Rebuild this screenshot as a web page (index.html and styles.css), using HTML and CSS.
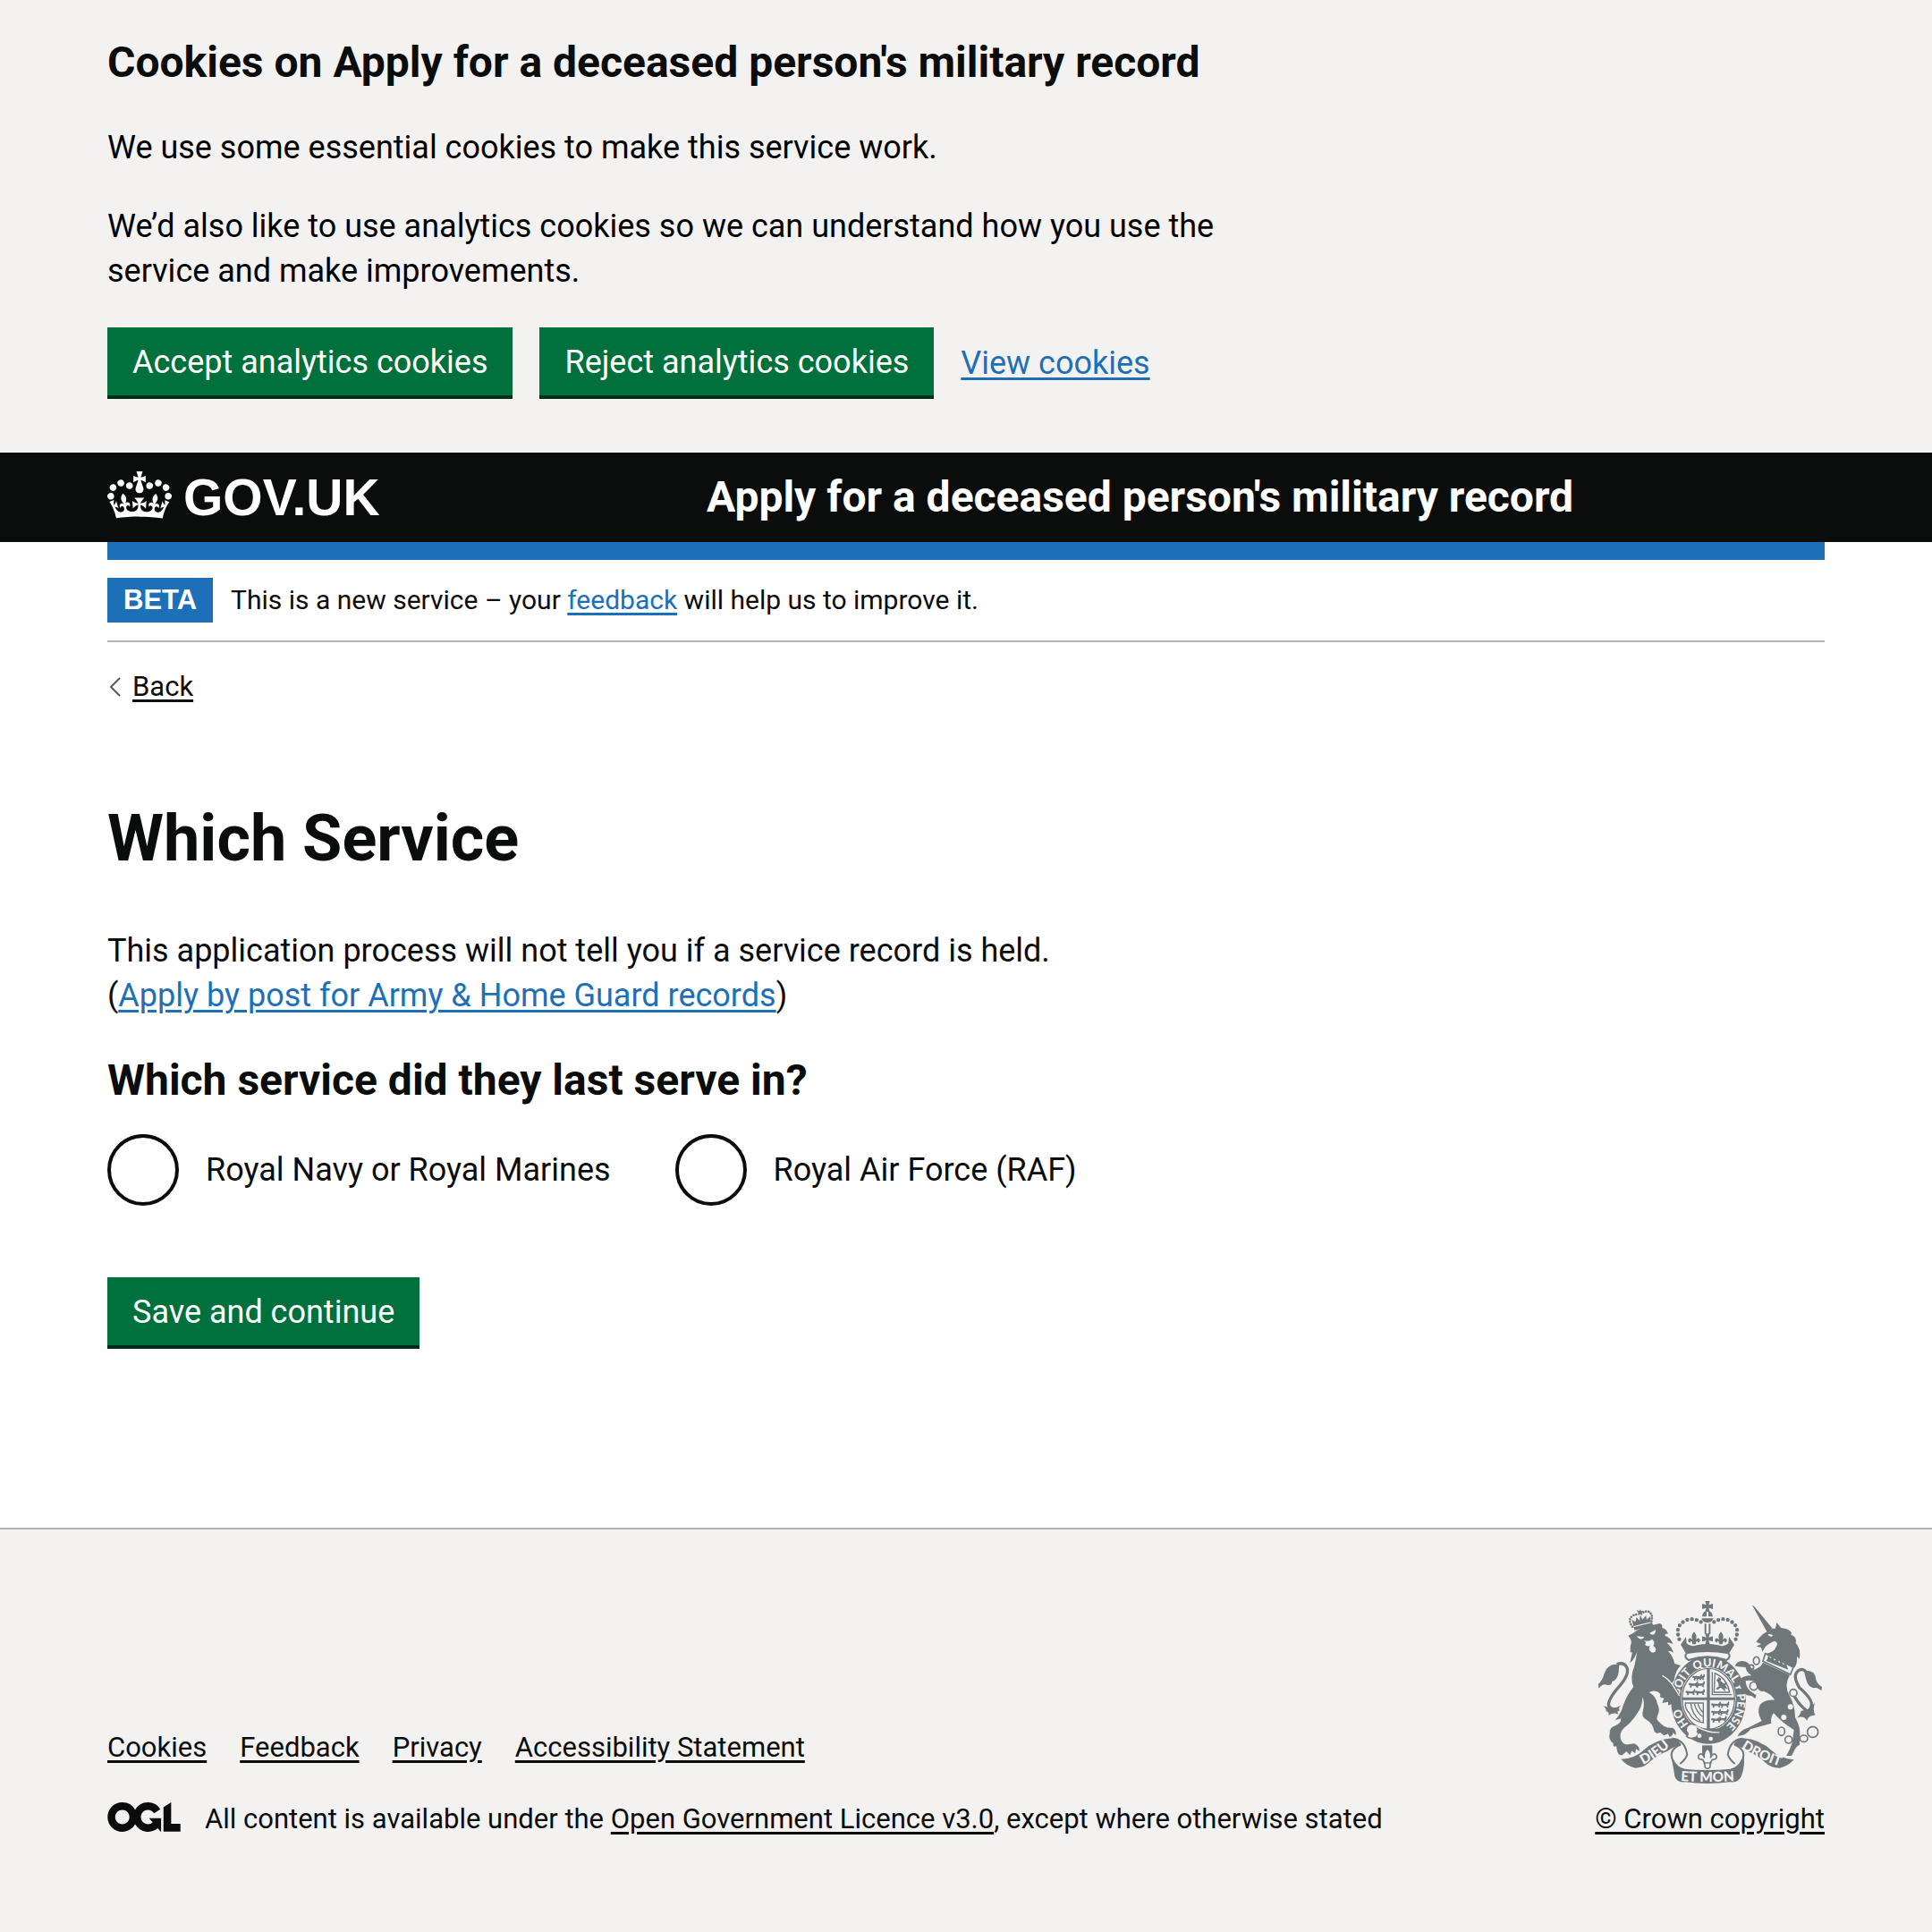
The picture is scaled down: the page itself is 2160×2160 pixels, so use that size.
FILE: index.html
```html
<!DOCTYPE html>
<html lang="en">
<head>
<meta charset="utf-8">
<meta name="viewport" content="width=device-width, initial-scale=1">
<title>Which Service - Apply for a deceased person's military record</title>
<link rel="stylesheet" href="styles.css">
</head>
<body>
<section class="cookie-banner" aria-label="Cookies on Apply for a deceased person's military record">
  <div class="container">
    <div class="cookie-banner-message">
      <h2 class="heading-m">Cookies on Apply for a deceased person's military record</h2>
      <p>We use some essential cookies to make this service work.</p>
      <p>We’d also like to use analytics cookies so we can understand how you use the service and make improvements.</p>
    </div>
    <div class="button-group">
      <button type="button" class="button">Accept analytics cookies</button>
      <button type="button" class="button">Reject analytics cookies</button>
      <a class="link" href="#cookies">View cookies</a>
    </div>
  </div>
</section>

<header class="header">
  <div class="container header-row">
    <a class="header-logo" href="#home">
      <svg class="crown" viewBox="0 0 132 97" aria-hidden="true"><path fill="currentColor" fill-rule="evenodd" d="M25 30.2c3.5 1.5 7.7-.2 9.1-3.7 1.5-3.6-.2-7.8-3.9-9.2-3.6-1.4-7.6.3-9.1 3.9-1.4 3.5.3 7.5 3.9 9zM9 39.5c3.6 1.5 7.8-.2 9.2-3.7 1.5-3.6-.2-7.8-3.9-9.1-3.6-1.5-7.6.2-9.1 3.8-1.4 3.5.3 7.5 3.8 9zM4.4 57.2c3.5 1.5 7.7-.2 9.1-3.8 1.5-3.6-.2-7.7-3.9-9.1-3.5-1.5-7.6.3-9.1 3.8-1.4 3.5.3 7.6 3.9 9.1zm38.3-21.4c3.5 1.5 7.7-.2 9.1-3.8 1.5-3.6-.2-7.7-3.9-9.1-3.6-1.5-7.6.3-9.1 3.8-1.3 3.6.4 7.7 3.9 9.1zm64.4-5.6c-3.6 1.5-7.8-.2-9.1-3.7-1.5-3.6.2-7.8 3.8-9.2 3.6-1.4 7.7.3 9.2 3.9 1.3 3.5-.4 7.5-3.9 9zm15.9 9.3c-3.6 1.5-7.7-.2-9.1-3.7-1.5-3.6.2-7.8 3.7-9.1 3.6-1.5 7.7.2 9.2 3.8 1.5 3.5-.3 7.5-3.8 9zm4.7 17.7c-3.6 1.5-7.8-.2-9.2-3.8-1.5-3.6.2-7.7 3.9-9.1 3.6-1.5 7.7.3 9.2 3.8 1.3 3.5-.4 7.6-3.9 9.1zM89.3 35.8c-3.6 1.5-7.8-.2-9.2-3.8-1.4-3.6.2-7.7 3.9-9.1 3.6-1.5 7.7.3 9.2 3.8 1.4 3.6-.3 7.7-3.9 9.1zM69.7 17.7l8.9 4.7V9.3l-8.9 2.8c-.2-.3-.5-.6-.9-.9L72.4 0H59.6l3.5 11.2c-.3.3-.6.5-.9.9l-8.8-2.8v13.1l8.8-4.7c.3.3.6.7.9.9l-5 15.4v.1c-.2.8-.4 1.6-.4 2.4 0 4.1 3.1 7.5 7 8.1h.2c.3 0 .7.1 1 .1.4 0 .7 0 1-.1h.2c4-.6 7.1-4.1 7.1-8.1 0-.8-.1-1.7-.4-2.4V34l-5.1-15.4c.4-.2.7-.6 1-.9zM66 92.8c16.9 0 32.8 1.1 47.1 3.2 4-16.9 8.9-26.7 14-33.5l-9.6-3.4c1 4.9 1.1 7.2 0 10.2-1.5-1.4-3-4.3-4.2-8.7L108.6 76c2.8-2 5-3.2 7.5-3.3-4.4 9.4-10 11.9-13.6 11.2-4.3-.8-6.3-4.6-5.6-7.9 1-4.7 5.7-5.9 8-.5 4.3-8.7-3-11.4-7.6-8.8 7.1-7.2 7.9-13.5 2.1-21.1-8 6.1-8.1 12.3-4.5 20.8-4.7-5.4-12.1-2.5-9.5 6.2 3.4-5.2 7.9-2 7.2 3.1-.6 4.3-6.4 7.8-13.5 7.2-10.3-.9-10.9-8-11.2-13.8 2.5-.5 7.1 1.8 11 7.3L80.2 60c-4.1 4.4-8 5.3-12.3 5.4 1.4-4.4 8-11.6 8-11.6H55.5s6.4 7.2 7.9 11.6c-4.2-.1-8-1-12.3-5.4l1.4 16c3.9-5.5 8.5-7.7 10.9-7.3-.3 5.8-.9 12.8-11.1 13.8-7.2.6-12.9-2.9-13.5-7.2-.7-5 3.8-8.3 7.1-3.1 2.7-8.7-4.6-11.6-9.4-6.2 3.7-8.5 3.6-14.7-4.6-20.8-5.8 7.6-5 13.9 2.2 21.1-4.7-2.6-11.9.1-7.7 8.8 2.3-5.5 7.1-4.2 8.1.5.7 3.3-1.3 7.1-5.7 7.9-3.5.7-9-1.8-13.5-11.2 2.5.1 4.7 1.3 7.5 3.3l-4.7-15.4c-1.2 4.4-2.7 7.2-4.3 8.7-1.1-3-.9-5.3 0-10.2l-9.5 3.4c5 6.9 9.9 16.7 14 33.5 14.8-2.1 30.8-3.2 47.7-3.2z"/></svg>
      <span>GOV.UK</span>
    </a>
    <a class="header-service" href="#service">Apply for a deceased person's military record</a>
  </div>
</header>

<div class="container page">
  <div class="phase-banner">
    <strong class="tag">BETA</strong>
    <span>This is a new service – your <a class="link" href="#feedback">feedback</a> will help us to improve it.</span>
  </div>
  <a class="back-link" href="#back">
    <svg class="chevron" viewBox="0 0 20 26" aria-hidden="true"><path d="M14 3 4 13l10 10" fill="none" stroke="#505a5f" stroke-width="2"/></svg>
    <span>Back</span>
  </a>
  <main>
    <h1 class="heading-xl">Which Service</h1>
    <p>This application process will not tell you if a service record is held.<br>(<a class="link" href="#post">Apply by post for Army &amp; Home Guard records</a>)</p>
    <form>
      <fieldset class="fieldset">
        <legend class="heading-m">Which service did they last serve in?</legend>
        <div class="radios">
          <div class="radio-item">
            <input class="radio" type="radio" id="navy" name="service" value="navy">
            <label for="navy">Royal Navy or Royal Marines</label>
          </div>
          <div class="radio-item">
            <input class="radio" type="radio" id="raf" name="service" value="raf">
            <label for="raf">Royal Air Force (RAF)</label>
          </div>
        </div>
      </fieldset>
      <button type="button" class="button">Save and continue</button>
    </form>
  </main>
</div>

<footer class="footer">
  <div class="container footer-row">
    <div class="footer-meta">
      <ul class="footer-links">
        <li><a href="#cookies">Cookies</a></li>
        <li><a href="#feedback">Feedback</a></li>
        <li><a href="#privacy">Privacy</a></li>
        <li><a href="#accessibility">Accessibility Statement</a></li>
      </ul>
      <div class="licence">
        <svg class="ogl" viewBox="0 0 483.2 195.7" aria-hidden="true"><path fill="currentColor" d="M421.5 142.8V.1l-50.7 32.3v161.1h112.4v-50.7zm-122.3-9.6A47.12 47.12 0 0 1 221 97.8c0-26 21.1-47.1 47.1-47.1 16.7 0 31.4 8.7 39.7 21.8l42.7-27.2A97.63 97.63 0 0 0 268.1 0c-36.5 0-68.3 20.1-85.1 49.7A98 98 0 0 0 97.8 0C43.9 0 0 43.9 0 97.8s43.9 97.8 97.8 97.8c36.5 0 68.3-20.1 85.1-49.7a97.76 97.76 0 0 0 149.6 25.4l19.4 22.2h3v-87.8h-80l24.3 27.5zM97.8 145c-26 0-47.1-21.1-47.1-47.1s21.1-47.1 47.1-47.1 47.1 21.1 47.1 47.1S123.8 145 97.8 145"/></svg>
        <span>All content is available under the <a href="#licence">Open Government Licence v3.0</a>, except where otherwise stated</span>
      </div>
    </div>
    <a class="copyright" href="#copyright">
      <svg class="crest" viewBox="42 30 750 612" aria-hidden="true">
        <defs>
          <path id="garter" d="M411 472A97 111 0 0 1 411 250A97 111 0 0 1 411 472"/>
          <path id="dieu" d="M180 584Q236 560 292 508"/>
          <path id="etmon" d="M308 632Q408 640 508 632"/>
          <path id="droit" d="M516 520Q570 558 656 586"/>
          <g id="cross"><path d="M-8-18H8L4-5 18-9V9L4 5 8 18H-8L-4 5-18 9V-9L-4-5z"/></g>
          <g id="fleur"><path d="M0-22Q12-8 6 4Q18-6 20 6Q20 14 12 14Q14 8 8 10L5 20H-5L-8 10Q-14 8-12 14Q-20 14-20 6Q-18-6-6 4Q-12-8 0-22z"/></g>
          <g id="passant"><path d="M0 6Q4 0 8 4L24 5Q30 1 29-4L33-1Q34 8 29 11L31 17H26L23 12 12 12 10 18H5L6 11 2 10z"/></g>
        </defs>

        <!-- garter -->
        <g class="ink">
          <ellipse cx="411" cy="361" rx="126" ry="148"/>
          <ellipse class="paper" cx="411" cy="358" rx="92" ry="106"/>
          <ellipse class="line" cx="411" cy="358" rx="88" ry="102"/>
          <path d="M406 256h10v204h-10zM323 353h176v9H323z"/>
          <use href="#passant" x="357" y="278"/><use href="#passant" x="344" y="302"/><use href="#passant" x="334" y="328"/>
          <use href="#passant" x="366" y="302"/><use href="#passant" x="366" y="328"/><use href="#passant" x="366" y="278"/>
          <use href="#passant" x="420" y="370"/><use href="#passant" x="420" y="395"/><use href="#passant" x="420" y="420"/>
          <use href="#passant" x="448" y="370"/><use href="#passant" x="446" y="395"/><use href="#passant" x="440" y="418"/>
          <path class="line" d="M424 268v76h66M433 272Q474 290 482 336H430z"/>
          <path d="M438 296l8-10 8 4-2 8 10 8 12-2-6 8 8 14-10-4 2 12-8-8-8-6-10 8-6-4 10-8-2-12z"/>
          <path class="line" d="M334 372h60v66Q360 434 346 404Q332 390 334 372z"/>
          <path class="line" d="M352 374Q356 410 384 432M364 374Q370 402 392 418M376 374Q380 392 394 404"/>
          <path d="M372 458h72l-10 12h-50z"/>
        </g>
        <g class="motto garter-motto">
          <text><textPath href="#garter" startOffset="16%">HO</textPath></text>
          <text><textPath href="#garter" startOffset="34%">SOIT</textPath></text>
          <text><textPath href="#garter" startOffset="48%">QUI</textPath></text>
          <text><textPath href="#garter" startOffset="60%">MAL</textPath></text>
          <text><textPath href="#garter" startOffset="69%">Y</textPath></text>
          <text><textPath href="#garter" startOffset="81%">PENSE</textPath></text>
        </g>
        <g>
          <path class="outlined" d="M338 452Q350 436 366 446Q380 456 374 468Q382 476 370 486Q352 496 338 484Q348 474 336 466z"/>
          <circle class="paper" cx="381" cy="482" r="7"/><circle class="paper" cx="419" cy="492" r="7"/>
          <path class="seam" d="M366 448Q410 474 448 470"/>
        </g>

        <!-- royal crown -->
        <g class="ink">
          <use href="#cross" x="408" y="48"/>
          <path d="M390 82Q392 64 405 64V82zM411 64Q424 64 426 82H411zM388 88H428Q424 102 408 102Q392 102 388 88z"/>
          <path d="M398 106h6v34h-6zM412 106h6v34h-6z"/>
          <path class="pearls" d="M386 100Q360 84 334 95Q304 112 309 140Q311 158 320 170M430 100Q456 84 482 95Q512 112 507 140Q505 158 496 170"/>
          <use href="#cross" x="408" y="157"/><use href="#fleur" x="363" y="155"/><use href="#fleur" x="453" y="155"/>
          <path d="M318 176L336 150 338 172Q352 186 372 178Q408 170 444 178Q464 186 478 172L480 150 498 176 480 206Q408 188 336 206z"/>
          <path class="collar" d="M340 204Q408 192 476 204Q490 216 472 228Q408 206 344 228Q326 216 340 204z"/>
        </g>

        <!-- lion -->
        <g class="ink">
          <path class="tail" d="M112 394Q76 396 76 374Q80 352 112 316Q150 272 136 250Q126 234 104 242"/>
          <path d="M112 243Q74 238 62 272Q56 296 42 308L43 323Q58 304 72 312Q88 314 88 300Q104 298 110 270z"/>
          <path d="M58 382Q70 392 68 400Q80 402 76 414Q92 402 108 410Q102 396 118 380Q96 392 78 386z"/>
          <path d="M142 146L158 138Q172 124 200 116L248 105Q258 108 256 120Q270 122 276 140Q264 138 266 146Q286 154 292 174Q280 168 272 170Q290 186 294 204Q284 196 276 198Q292 214 298 240L318 246Q300 264 296 296L288 306Q312 326 316 348Q322 364 310 384L306 372 296 386 290 374 276 380 276 368 256 372 262 356 248 352Q254 340 240 334 226 328 212 336Q236 350 240 375Q250 395 242 410Q232 425 248 437Q262 456 290 455Q304 460 302 480L292 472Q292 484 280 485L276 475 262 481 250 471Q232 478 228 462Q224 442 206 430Q184 420 192 396Q198 372 190 352Q190 385 170 410Q150 440 128 455Q108 475 120 500Q128 512 142 511L162 508Q180 515 180 534L168 526 166 541 154 532 148 547 136 534 122 547Q110 548 106 536L102 517Q90 522 92 507Q74 495 80 475Q78 455 96 449Q120 440 118 424L98 430Q122 400 125 380Q140 340 160 318Q146 290 164 244L172 200Q162 226 148 238L156 200Q146 212 150 178Q158 165 142 146z"/>
          <path d="M160 118L222 102 226 112 164 128z"/>
          <path d="M160 114L154 92 166 100 170 84 180 96 182 76 190 92 202 78 204 92 216 82 218 100z"/>
          <path class="small-pearls" d="M156 116Q140 94 154 82Q166 72 176 76M220 98Q226 76 212 66Q198 62 188 72"/>
          <path d="M170 60l10 4 2-6 4 6 8-2-6 8 2 8-8-4-8 4 2-8z"/>
          <g class="paper">
            <path d="M170 148L196 150Q190 162 178 155zM213 138L234 126Q236 142 222 143zM194 162Q210 168 222 158Q234 166 226 180Q240 190 232 200Q222 208 214 196Q210 186 216 180Q204 184 198 176Q206 170 194 162z"/>
          </g>
          <path class="seam" d="M256 280Q276 290 290 310Q306 334 314 348"/>
        </g>

        <!-- unicorn -->
        <g class="ink">
          <path d="M558 44L565 48 626 122 608 134z"/>
          <path d="M571 167Q590 136 628 122L636 122 640 102 655 120Q684 122 692 140Q682 138 690 144Q708 150 704 170Q722 190 717 224L708 216Q710 244 698 254L602 206Q630 206 640 180Q646 168 632 164Q612 172 602 184L592 200 588 186 572 182 588 174z"/>
          <path class="paper" d="M610 142q12-4 18 4-10 8-18-4z"/>
          <path class="outlined" d="M602 206L696 252 686 276 594 232z"/>
          <path d="M608 226l4-14 8 10 8-6 4 14 10-8 6 16 8-8 6 14 8-6 6 14 2 8-74-30z"/>
          <path d="M594 236L684 278Q664 312 682 345Q702 380 702 420Q718 450 718 470L717 512Q704 518 698 534L690 549H672Q684 530 692 506L698 462Q660 440 630 406Q618 420 622 440Q586 450 552 460Q538 482 508 483Q520 462 542 456L590 432Q572 402 584 378Q600 360 634 362Q620 340 596 332Q578 340 568 300Q548 294 536 298Q536 318 552 332L572 346 568 357 556 348 540 346Q518 326 512 296Q526 280 556 280Q538 270 536 252Q518 250 500 248Q506 232 524 231Q546 232 552 250Q560 268 576 254Q588 250 594 236z"/>
          <path class="tail" d="M748 398Q764 380 752 360Q740 340 716 320Q692 280 712 264Q728 252 742 272"/>
          <path class="tail" d="M700 350Q716 380 748 404"/>
          <path d="M732 266Q768 256 772 294Q778 312 792 318L790 331Q776 318 764 322Q744 318 738 290zM722 398Q720 412 706 422Q732 412 742 432Q742 416 770 412Q760 402 768 370Q752 398 722 398z"/>
          <g class="chain">
            <ellipse cx="572" cy="230" rx="10" ry="13"/><circle cx="555" cy="252" r="8"/><ellipse cx="563" cy="315" rx="13" ry="14"/>
            <circle class="outlined" cx="696" cy="338" r="12"/><ellipse cx="656" cy="467" rx="11" ry="14"/><ellipse cx="680" cy="495" rx="12" ry="12"/>
            <ellipse cx="731" cy="491" rx="13" ry="11"/><circle cx="761" cy="469" r="18"/>
          </g>
          <circle class="paper" cx="686" cy="385" r="9"/><circle class="paper" cx="664" cy="420" r="9"/>
        </g>

        <!-- scroll -->
        <g class="ink">
          <path d="M118 560Q162 560 192 532Q232 494 290 490Q310 492 320 512Q288 520 272 534Q236 548 216 568Q196 590 166 590Q138 584 118 560z"/>
          <path class="line thick" d="M290 491Q332 494 340 545Q334 562 316 576M318 512Q278 528 290 560Q304 590 330 596"/>
          <path d="M698 562Q654 560 624 532Q584 494 526 490Q506 492 496 512Q528 520 544 534Q580 550 600 570Q620 590 650 590Q678 584 698 562z"/>
          <path class="line thick" d="M526 491Q484 494 476 545Q482 562 500 576M498 512Q538 528 526 560Q512 590 486 596"/>
          <path d="M286 552Q296 588 330 593Q408 601 486 593Q520 588 530 552Q534 590 520 620Q510 640 484 637Q408 647 332 637Q306 640 298 618Q294 590 286 552z"/>
          <path d="M390 514h34v32h-34z"/>
          <path class="outlined" d="M408 524Q424 540 418 556Q428 534 438 548Q442 562 424 562L418 572 416 588Q408 596 400 588L398 572 392 562Q374 562 378 548Q388 534 398 556Q392 540 408 524z"/>
          <path class="line" d="M394 573h28"/>
        </g>
        <g class="motto scroll-motto">
          <text><textPath href="#dieu" startOffset="50%">DIEU</textPath></text>
          <text><textPath href="#etmon" startOffset="50%">ET MON</textPath></text>
          <text><textPath href="#droit" startOffset="50%">DROIT</textPath></text>
        </g>
      </svg>
      <span>© Crown copyright</span>
    </a>
  </div>
</footer>
</body>
</html>
```

FILE: styles.css
```css
:root {
  --black: #0b0c0c;
  --blue: #1d70b8;
  --green: #00703c;
  --grey: #f3f2f1;
  --border: #b1b4b6;
  --crest: #6f777b;
}

* { box-sizing: border-box; }

body {
  display: flex;
  flex-direction: column;
  min-height: 100vh;
  margin: 0;
  background: #fff;
  color: var(--black);
  font: 36px/50px Roboto, Arial, sans-serif;
}

h1, h2, p, ul, fieldset { margin: 0; padding: 0; }

a {
  color: inherit;
  text-decoration-thickness: 3px;
  text-underline-offset: 4px;
}

.link { color: var(--blue); }

.container { margin: 0 120px; }

.heading-m { font-size: 48px; line-height: 60px; font-weight: 700; }
.heading-xl { font-size: 72px; line-height: 80px; font-weight: 700; margin: 110px 0 60px; }

/* Cookie banner */
.cookie-banner { background: var(--grey); padding: 40px 0 60px; }
.cookie-banner-message { max-width: 1270px; }
.cookie-banner .heading-m { margin-bottom: 40px; }
.cookie-banner p { margin-bottom: 38px; color: #000; }

.button-group { display: flex; align-items: center; gap: 30px; }

.button {
  display: block;
  border: 0;
  border-bottom: 4px solid #002d18;
  padding: 14px 28px 12px;
  background: var(--green);
  color: #fff;
  font: inherit;
}

/* Header */
.header { background: linear-gradient(var(--black) 100px, #fff 100px); color: #fff; }
.header-row {
  display: grid;
  grid-template-columns: calc(33.33% + 30px) 1fr;
  align-items: center;
  height: 120px;
  border-bottom: 20px solid var(--blue);
}
.header a { text-decoration: none; }
.header-logo {
  display: flex;
  align-items: center;
  gap: 13px;
  font: 700 57px/60px "Liberation Sans", Arial, sans-serif;
}
.crown { width: 72px; height: 53px; margin-bottom: 5px; }
.header-service { font-size: 48px; line-height: 60px; font-weight: 700; }

/* Phase banner */
.phase-banner {
  display: flex;
  align-items: center;
  gap: 20px;
  padding: 20px 0;
  border-bottom: 2px solid var(--border);
  font-size: 30px;
}
.tag {
  padding: 0 18px;
  background: var(--blue);
  color: #fff;
  font: 700 31px/50px "Liberation Sans", Arial, sans-serif;
}

.back-link {
  display: flex;
  align-items: center;
  gap: 8px;
  width: fit-content;
  margin-top: 30px;
  font-size: 31px;
  line-height: 40px;
}
.chevron { width: 20px; height: 26px; }

/* Form */
.fieldset { border: 0; margin: 40px 0 80px; }
.fieldset legend { padding: 0; margin-bottom: 30px; }
.radios { display: flex; gap: 72px; }
.radio-item { display: flex; align-items: center; gap: 30px; }
.radio {
  appearance: none;
  width: 80px;
  height: 80px;
  margin: 0;
  border: 4px solid var(--black);
  border-radius: 50%;
  background: #fff;
}
.radio:checked { box-shadow: inset 0 0 0 16px #fff; background: var(--black); }

/* Footer */
.footer {
  flex: 1;
  margin-top: 200px;
  padding: 80px 0;
  border-top: 2px solid var(--border);
  background: var(--grey);
  font-size: 31px;
  line-height: 40px;
}
.footer-row { display: flex; justify-content: space-between; align-items: flex-end; }
.footer-meta { display: grid; gap: 40px; }
.footer-links { display: flex; gap: 37px; list-style: none; }
.licence { display: flex; align-items: center; gap: 27px; }
.ogl { width: 82px; height: 33px; margin-bottom: 6px; }
.copyright { display: flex; flex-direction: column; align-items: center; gap: 20px; }
.crest { width: 250px; height: 204px; color: var(--crest); }

/* Crest drawing */
.ink { fill: currentColor; }
.paper { fill: var(--grey); }
.line { fill: none; stroke: currentColor; stroke-width: 4; }
.thick { stroke-width: 6; }
.outlined { fill: var(--grey); stroke: currentColor; stroke-width: 5; }
.collar { fill: var(--grey); stroke: currentColor; stroke-width: 6; }
.seam { fill: none; stroke: var(--grey); stroke-width: 4; }
.tail { fill: none; stroke: currentColor; stroke-width: 10; }
.chain { fill: none; stroke: currentColor; stroke-width: 5; }
.pearls { fill: none; stroke: currentColor; stroke-width: 13; stroke-linecap: round; stroke-dasharray: 0 16; }
.small-pearls { fill: none; stroke: currentColor; stroke-width: 8; stroke-linecap: round; stroke-dasharray: 0 9; }
.motto { fill: var(--grey); font-family: Lato, sans-serif; font-weight: 900; text-anchor: middle; }
.garter-motto { font-size: 38px; }
.scroll-motto { font-size: 46px; }
```
